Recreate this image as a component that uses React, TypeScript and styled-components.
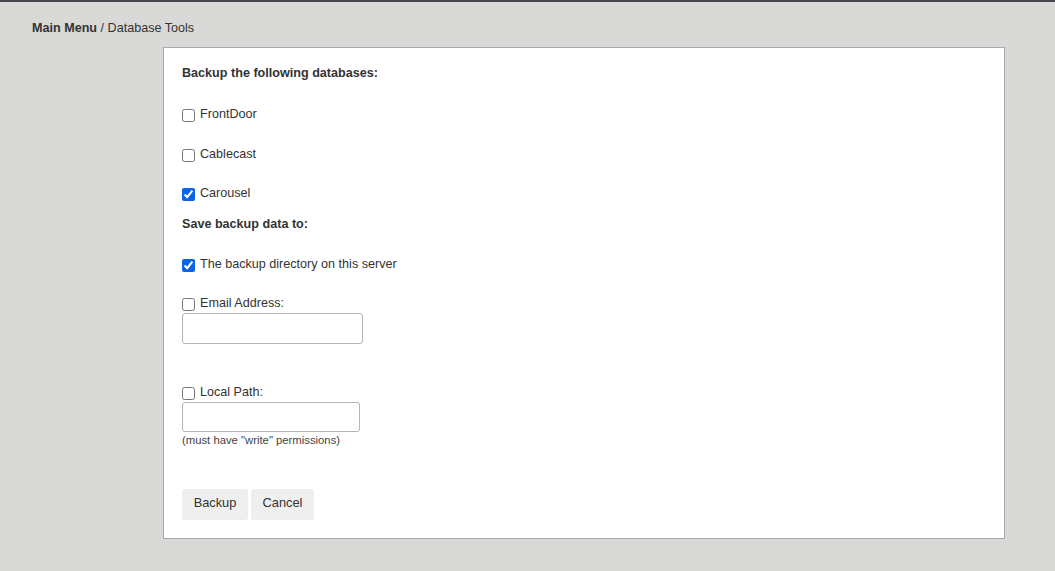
import styled, { createGlobalStyle } from 'styled-components'

const GlobalStyle = createGlobalStyle`
  html, body {
    margin: 0;
    padding: 0;
    background: #d9d9d7;
  }
  body {
    font-family: "Liberation Sans", Arial, sans-serif;
    color: #333;
  }
  * { box-sizing: border-box; }
`

const TopLine = styled.div`
  height: 2px;
  background: #45454d;
`

const Page = styled.div`
  padding: 0 0 32px 0;
`

const Breadcrumb = styled.div`
  font-size: 12.6px;
  line-height: 16px;
  padding: 18px 0 0 32px;
  height: 45px;

  b { font-weight: bold; }
`

const Panel = styled.div`
  margin-left: 163px;
  width: 842px;
  height: 492px;
  background: #fff;
  border: 1px solid #aaa;
  padding: 17px 18px 18px 18px;
`

const Heading = styled.div<{ $top?: number }>`
  font-size: 12.6px;
  line-height: 16px;
  font-weight: bold;
  margin-top: ${p => p.$top ?? 0}px;
`

const Option = styled.label<{ $top: number }>`
  display: flex;
  align-items: flex-start;
  height: 16px;
  font-size: 12.6px;
  line-height: 18px;
  margin-top: ${p => p.$top}px;

  input {
    flex: none;
    width: 13px;
    height: 13px;
    margin: 4px 5px 0 0;
    accent-color: #0b63e5;
  }
`

const TextField = styled.input<{ $w: number; $h: number }>`
  display: block;
  width: ${p => p.$w}px;
  height: ${p => p.$h}px;
  margin-top: 3px;
  border: 1px solid #b4b4b4;
  border-radius: 3px;
  background: #fff;
`

const Hint = styled.div`
  font-size: 11.3px;
  line-height: 13px;
  margin-top: 2px;
  color: #444;
`

const Buttons = styled.div`
  display: flex;
  gap: 3px;
  margin-top: 42px;
`

const Button = styled.button<{ $w: number }>`
  width: ${p => p.$w}px;
  height: 31px;
  padding: 0 0 4px;
  border: none;
  border-radius: 3px;
  background: #efefef;
  color: #333;
  font-family: "Liberation Sans", Arial, sans-serif;
  font-size: 12.8px;
  cursor: pointer;
`

function App() {
  return (
    <>
      <GlobalStyle />
      <TopLine />
      <Page>
        <Breadcrumb>
          <b>Main Menu</b> / Database Tools
        </Breadcrumb>
        <Panel>
          <Heading>Backup the following databases:</Heading>
          <Option $top={24}><input type="checkbox" />FrontDoor</Option>
          <Option $top={24}><input type="checkbox" />Cablecast</Option>
          <Option $top={23}><input type="checkbox" defaultChecked />Carousel</Option>

          <Heading $top={16}>Save backup data to:</Heading>
          <Option $top={23}><input type="checkbox" defaultChecked />The backup directory on this server</Option>
          <Option $top={23}><input type="checkbox" />Email Address:</Option>
          <TextField type="text" $w={181} $h={31} />

          <Option $top={39}><input type="checkbox" />Local Path:</Option>
          <TextField type="text" $w={178} $h={30} />
          <Hint>(must have "write" permissions)</Hint>

          <Buttons>
            <Button $w={66}>Backup</Button>
            <Button $w={63}>Cancel</Button>
          </Buttons>
        </Panel>
      </Page>
    </>
  )
}

export default App
